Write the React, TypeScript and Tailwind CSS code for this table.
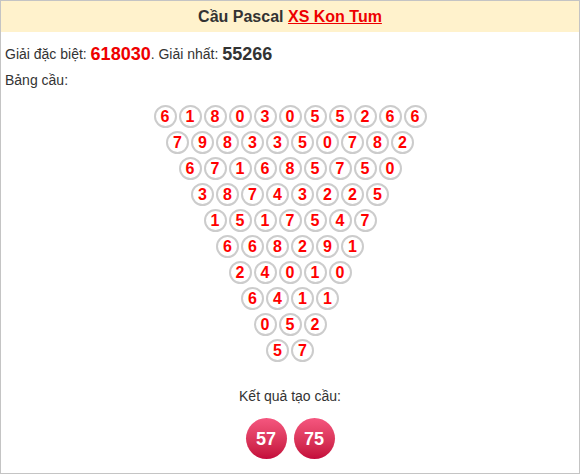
import React from "react";

const rows: string[] = [
  "61803055266",
  "7983350782",
  "671685750",
  "38743225",
  "1517547",
  "668291",
  "24010",
  "6411",
  "052",
  "57",
];

export default function App() {
  return (
    <div
      className="w-[580px] h-[474px] border border-[#c4c4c4] bg-white text-[#333333] flex flex-col"
      style={{ fontFamily: '"Liberation Sans", Arial, sans-serif' }}
    >
      <div className="h-[31px] bg-[#fff2cc] flex items-center justify-center text-[16px] font-bold text-[#333333]">
        <span>
          Cầu Pascal{" "}
          <a className="text-[#ee0000] underline">XS Kon Tum</a>
        </span>
      </div>
      <div className="px-[4px] pt-[9px] flex flex-col">
        <div className="h-[26px] flex items-center text-[14px] leading-none">
          <span>Giải đặc biệt:&nbsp;</span>
          <span className="text-[18px] font-bold text-[#ee0000]">618030</span>
          <span>. Giải nhất:&nbsp;</span>
          <span className="text-[18px] font-bold text-[#333333]">55266</span>
        </div>
        <div className="h-[26px] flex items-center text-[14px]">Bảng cầu:</div>
      </div>
      <div className="mt-[12px] flex flex-col items-center gap-[3px]">
        {rows.map((r, i) => (
          <div key={i} className="flex gap-[2px] h-[23px]">
            {r.split("").map((d, j) => (
              <div
                key={j}
                className="w-[23px] h-[23px] rounded-full border-2 border-[#cccccc] flex items-center justify-center text-[16px] font-bold text-[#ff0000] leading-none"
              >
                {d}
              </div>
            ))}
          </div>
        ))}
      </div>
      <div className="mt-[24px] h-[20px] flex items-center justify-center text-[14px]">
        Kết quả tạo cầu:
      </div>
      <div className="mt-[12px] flex justify-center gap-[7px]">
        {["57", "75"].map((n) => (
          <div
            key={n}
            className="w-[41px] h-[41px] rounded-full bg-gradient-to-b from-[#f5567f] to-[#c4083b] flex items-center justify-center text-white text-[18px] font-bold leading-none"
          >
            {n}
          </div>
        ))}
      </div>
    </div>
  );
}
